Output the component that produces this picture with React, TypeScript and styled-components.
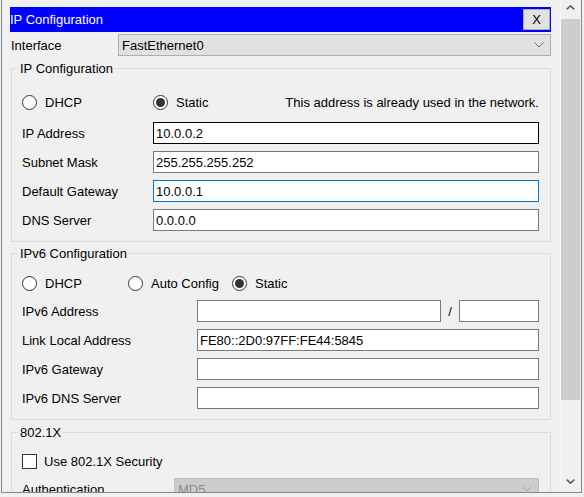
import React from "react";
import styled, { createGlobalStyle } from "styled-components";

const Global = createGlobalStyle`
  html, body { margin: 0; padding: 0; background: #f0f0f0; }
  body { font-family: "Liberation Sans", Arial, sans-serif; font-size: 13px; color: #000; }
  *, *::before, *::after { box-sizing: border-box; }
`;

const Window = styled.div`
  width: 584px;
  height: 497px;
  background: #f0f0f0;
  padding-left: 1px;
  overflow: hidden;
`;

const ScrollPane = styled.div`
  width: 581px;
  height: 493px;
  border: 1px solid #828790;
  border-top: none;
  display: flex;
`;

const Viewport = styled.div`
  width: 558px;
  flex: none;
  overflow: hidden;
  padding: 7px 9px 0 8px;
  display: flex;
  flex-direction: column;
`;

const TitleBar = styled.div`
  height: 25px;
  flex: none;
  background: #0000ff;
  color: #fff;
  display: flex;
  align-items: center;
  padding-right: 1px;
`;

const TitleText = styled.span`
  line-height: 15px;
`;

const CloseButton = styled.div`
  margin-left: auto;
  width: 27px;
  height: 21px;
  background: #e1e1e1;
  border: 1px solid #adadad;
  color: #000;
  display: flex;
  align-items: center;
  justify-content: center;
  line-height: 15px;
`;

const InterfaceRow = styled.div`
  margin-top: 2px;
  height: 22px;
  flex: none;
  display: flex;
  align-items: center;
`;

const RowLabel = styled.span<{ $width: number; $indent?: number }>`
  width: ${(p) => p.$width}px;
  flex: none;
  padding-left: ${(p) => p.$indent ?? 0}px;
  line-height: 15px;
  white-space: nowrap;
`;

const Combo = styled.div<{ $disabled?: boolean }>`
  flex: 1;
  height: 22px;
  background: ${(p) => (p.$disabled ? "#cccccc" : "#e1e1e1")};
  border: 1px solid ${(p) => (p.$disabled ? "#bfbfbf" : "#adadad")};
  color: ${(p) => (p.$disabled ? "#8d8d8d" : "#000")};
  display: flex;
  align-items: center;
  justify-content: space-between;
  padding: 0 6px 0 3px;
  line-height: 15px;
`;

const Group = styled.fieldset<{ $mt: number }>`
  margin: ${(p) => p.$mt}px 0 0 1px;
  padding: 0;
  width: 540px;
  min-width: 0;
  flex: none;
  border: 1px solid #dcdcdc;
`;

const Legend = styled.legend`
  margin-left: 6px;
  padding: 0 2px;
  line-height: 15px;
  font-size: 13px;
`;

const GroupBody = styled.div<{ $pt: number; $pb: number }>`
  padding: ${(p) => p.$pt}px 11px ${(p) => p.$pb}px 10px;
  display: flex;
  flex-direction: column;
  gap: 7px;
`;

const OptionRow = styled.div<{ $after: number }>`
  height: 22px;
  display: flex;
  align-items: center;
  margin-bottom: ${(p) => p.$after}px;
`;

const Option = styled.label<{ $width?: number }>`
  display: flex;
  align-items: center;
  gap: 8px;
  width: ${(p) => (p.$width ? `${p.$width}px` : "auto")};
  flex: none;
  line-height: 15px;
  white-space: nowrap;
`;

const RadioCircle = styled.span<{ $checked?: boolean }>`
  width: 15px;
  height: 15px;
  flex: none;
  border-radius: 50%;
  border: 1px solid #333;
  background: #fff;
  display: flex;
  align-items: center;
  justify-content: center;
  &::after {
    content: "";
    width: 9px;
    height: 9px;
    border-radius: 50%;
    background: ${(p) => (p.$checked ? "#333" : "transparent")};
  }
`;

const CheckBox = styled.span`
  width: 15px;
  height: 15px;
  flex: none;
  border: 1px solid #333;
  background: #fff;
`;

const CheckOption = styled.label`
  display: flex;
  align-items: center;
  gap: 7px;
  line-height: 15px;
`;

const Notice = styled.span`
  margin-left: auto;
  line-height: 15px;
  white-space: nowrap;
`;

const FieldRow = styled.div`
  height: 22px;
  display: flex;
  align-items: center;
`;

type Tone = "normal" | "focus" | "hover";
const toneColor: Record<Tone, string> = {
  normal: "#7a7a7a",
  focus: "#000000",
  hover: "#0078d7",
};

const TextField = styled.input<{ $tone?: Tone; $width?: number }>`
  height: 22px;
  flex: ${(p) => (p.$width ? "none" : "1")};
  width: ${(p) => (p.$width ? `${p.$width}px` : "auto")};
  min-width: 0;
  margin: 0;
  background: #fff;
  border: 1px solid ${(p) => toneColor[p.$tone ?? "normal"]};
  border-radius: 0;
  padding: 0 2px;
  font: inherit;
  font-size: 13px;
  color: #000;
  outline: none;
`;

const Slash = styled.span`
  width: 18px;
  flex: none;
  text-align: center;
  line-height: 15px;
`;

const ScrollBar = styled.div`
  width: 21px;
  flex: none;
  display: flex;
  flex-direction: column;
  border-left: 1px solid #f7f7f7;
  padding-right: 1px;
`;

const ArrowButton = styled.div<{ $pt: number }>`
  height: 17px;
  flex: none;
  display: flex;
  justify-content: center;
  align-items: flex-start;
  padding-top: ${(p) => p.$pt}px;
`;

const Track = styled.div`
  flex: 1;
  padding-top: 2px;
`;

const Thumb = styled.div`
  height: 381px;
  background: #cdcdcd;
`;

const ComboChevron = ({ color }: { color: string }) => (
  <svg width="10" height="6" viewBox="0 0 10 6">
    <polyline points="0.5,0.5 5,5 9.5,0.5" fill="none" stroke={color} strokeWidth="1" />
  </svg>
);

const ScrollChevron = ({ up }: { up?: boolean }) => (
  <svg width="9" height="5" viewBox="0 0 9 5">
    <polyline
      points={up ? "0.7,4.3 4.5,0.8 8.3,4.3" : "0.7,0.7 4.5,4.2 8.3,0.7"}
      fill="none"
      stroke="#606060"
      strokeWidth="1.6"
    />
  </svg>
);

const Radio = ({ label, checked, width }: { label: string; checked?: boolean; width?: number }) => (
  <Option $width={width}>
    <RadioCircle $checked={checked} />
    {label}
  </Option>
);

const Field = ({
  label,
  labelWidth,
  value = "",
  tone,
}: {
  label: string;
  labelWidth: number;
  value?: string;
  tone?: Tone;
}) => (
  <FieldRow>
    <RowLabel $width={labelWidth}>{label}</RowLabel>
    <TextField readOnly value={value} $tone={tone} />
  </FieldRow>
);

export default function App() {
  return (
    <>
      <Global />
      <Window>
        <ScrollPane>
          <Viewport>
            <TitleBar>
              <TitleText>IP Configuration</TitleText>
              <CloseButton>X</CloseButton>
            </TitleBar>

            <InterfaceRow>
              <RowLabel $width={108} $indent={1}>Interface</RowLabel>
              <Combo>
                FastEthernet0
                <ComboChevron color="#6d6d6d" />
              </Combo>
            </InterfaceRow>

            <Group $mt={5}>
              <Legend>IP Configuration</Legend>
              <GroupBody $pt={15} $pb={10}>
                <OptionRow $after={2}>
                  <Radio label="DHCP" width={131} />
                  <Radio label="Static" checked />
                  <Notice>This address is already used in the network.</Notice>
                </OptionRow>
                <Field label="IP Address" labelWidth={131} value="10.0.0.2" tone="focus" />
                <Field label="Subnet Mask" labelWidth={131} value="255.255.255.252" />
                <Field label="Default Gateway" labelWidth={131} value="10.0.0.1" tone="hover" />
                <Field label="DNS Server" labelWidth={131} value="0.0.0.0" />
              </GroupBody>
            </Group>

            <Group $mt={4}>
              <Legend>IPv6 Configuration</Legend>
              <GroupBody $pt={11} $pb={10}>
                <OptionRow $after={-1}>
                  <Radio label="DHCP" width={106} />
                  <Radio label="Auto Config" width={104} />
                  <Radio label="Static" checked />
                </OptionRow>
                <FieldRow>
                  <RowLabel $width={175}>IPv6 Address</RowLabel>
                  <TextField readOnly value="" $width={244} />
                  <Slash>/</Slash>
                  <TextField readOnly value="" $width={80} />
                </FieldRow>
                <Field label="Link Local Address" labelWidth={175} value="FE80::2D0:97FF:FE44:5845" />
                <Field label="IPv6 Gateway" labelWidth={175} />
                <Field label="IPv6 DNS Server" labelWidth={175} />
              </GroupBody>
            </Group>

            <Group $mt={5}>
              <Legend>802.1X</Legend>
              <GroupBody $pt={10} $pb={10}>
                <OptionRow $after={-1}>
                  <CheckOption>
                    <CheckBox />
                    Use 802.1X Security
                  </CheckOption>
                </OptionRow>
                <FieldRow>
                  <RowLabel $width={152}>Authentication</RowLabel>
                  <Combo $disabled>
                    MD5
                    <ComboChevron color="#a6a6a6" />
                  </Combo>
                </FieldRow>
              </GroupBody>
            </Group>
          </Viewport>

          <ScrollBar>
            <ArrowButton $pt={5}>
              <ScrollChevron up />
            </ArrowButton>
            <Track>
              <Thumb />
            </Track>
            <ArrowButton $pt={4}>
              <ScrollChevron />
            </ArrowButton>
          </ScrollBar>
        </ScrollPane>
      </Window>
    </>
  );
}
